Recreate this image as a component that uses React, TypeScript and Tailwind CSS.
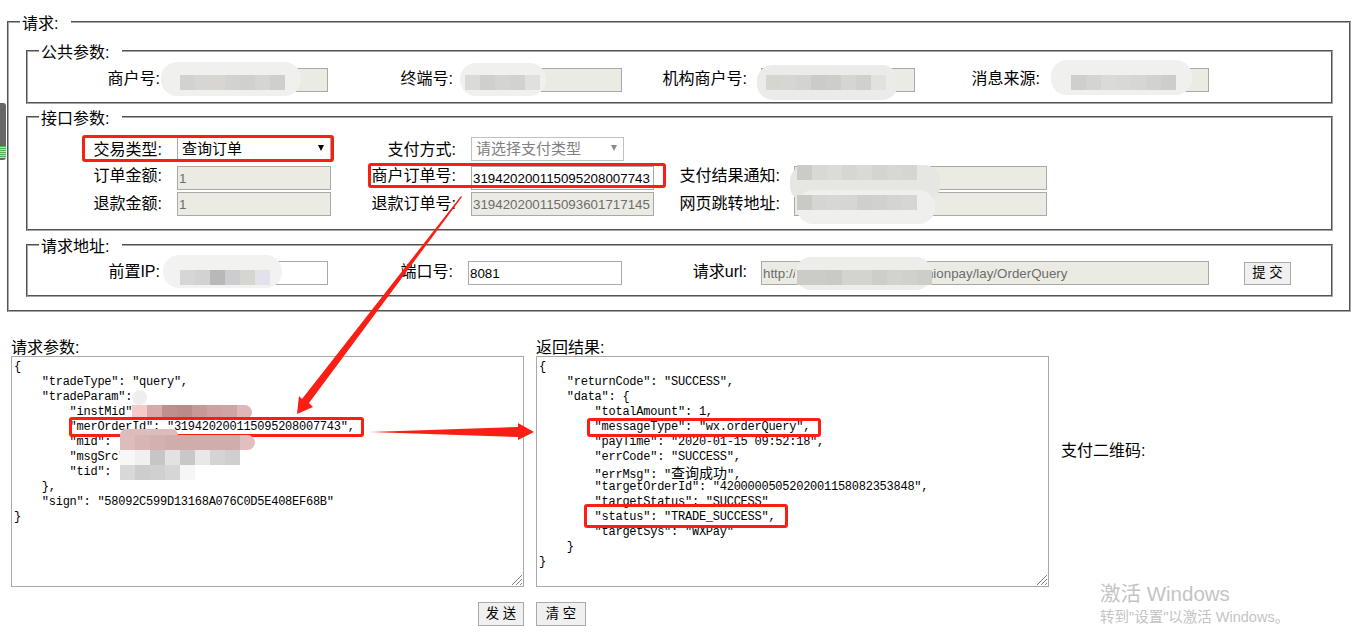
import type { ReactNode } from "react";

const sans = "font-['Liberation_Sans','Noto_Sans_CJK_SC',sans-serif]";

const requestLines: ReactNode[] = [
  "{",
  '    "tradeType": "query",',
  '    "tradeParam":',
  '        "instMid"                ,',
  '        "merOrderId": "319420200115095208007743",',
  '        "mid":',
  '        "msgSrc"',
  '        "tid":',
  "    },",
  '    "sign": "58092C599D13168A076C0D5E408EF68B"',
  "}",
];

const resultLines: ReactNode[] = [
  "{",
  '    "returnCode": "SUCCESS",',
  '    "data": {',
  '        "totalAmount": 1,',
  '        "messageType": "wx.orderQuery",',
  '        "payTime": "2020-01-15 09:52:18",',
  '        "errCode": "SUCCESS",',
  <>
    {'        "errMsg": "'}
    <span className="font-['Noto_Sans_CJK_SC',sans-serif] text-[14px] leading-none tracking-normal">查询成功</span>
    {'",'}
  </>,
  '        "targetOrderId": "4200000505202001158082353848",',
  '        "targetStatus": "SUCCESS"',
  '        "status": "TRADE_SUCCESS",',
  '        "targetSys": "WXPay"',
  "    }",
  "}",
];

function Box({ legend, className, children }: { legend: string; className: string; children: ReactNode }) {
  return (
    <fieldset className={`border-2 [border-style:groove] border-[#a6a6a6] ${className}`}>
      <legend className="ml-[11px] h-[24px] pl-[2px] pr-[13px] text-[16px] leading-[28px] text-black">{legend}</legend>
      {children}
    </fieldset>
  );
}

function Label({ className, children }: { className: string; children: ReactNode }) {
  return <label className={`h-[24px] shrink-0 text-right text-[16px] leading-[22px] text-black ${className}`}>{children}</label>;
}

function Input({ className, value, disabled }: { className: string; value?: string; disabled?: boolean }) {
  return (
    <input
      readOnly
      value={value ?? ""}
      className={`h-[24px] shrink-0 border border-[#a9a9a9] px-[1px] text-[13.33px] outline-none ${
        disabled ? "bg-[#ebebe4] text-[#6d6d6d]" : "bg-white text-black"
      } ${className}`}
    />
  );
}

function Select({ className, text, disabled }: { className: string; text: string; disabled?: boolean }) {
  return (
    <div
      className={`flex h-[24px] shrink-0 items-center justify-between border pl-[4px] pr-[6px] pt-[1px] text-[15px] ${
        disabled ? "border-[#c0c0c0] text-[#808080]" : "border-[#a9a9a9] text-black"
      } ${className}`}
    >
      <span>{text}</span>
      <svg width="6" height="6" viewBox="0 0 6 6" className="mb-[4px]">
        <path d="M0 0h6L3 6z" fill={disabled ? "#8a8a8a" : "#000"} />
      </svg>
    </div>
  );
}

function Button({ className, children }: { className: string; children: string }) {
  return (
    <button className={`shrink-0 border border-[#a9a9a9] bg-[#f0f0f0] text-[13.33px] text-black ${className}`}>
      {children}
    </button>
  );
}

function Code({ lines }: { lines: ReactNode[] }) {
  return (
    <div className="relative h-[231px] w-[513px] shrink-0 overflow-hidden border border-[#a9a9a9] bg-white pl-[2px] pt-[3px]">
      <div className="font-['Liberation_Mono',monospace] text-[12px] leading-[15px] tracking-[-0.25px] whitespace-pre text-black">
        {lines.map((line, i) => (
          <div key={i} className="h-[15px]">
            {line}
          </div>
        ))}
      </div>
      <svg width="12" height="12" viewBox="0 0 12 12" className="absolute bottom-0 right-0">
        <path d="M1 11 11 1M5 11l6-6M9 11l2-2" stroke="#808080" strokeWidth="1" />
      </svg>
    </div>
  );
}

function Smudge({ className }: { className: string }) {
  return <div className={`absolute rounded-[16px] ${className}`} />;
}

function Pixels({ className, colors }: { className: string; colors: string[] }) {
  return (
    <div className={`absolute flex ${className}`}>
      {colors.map((c, i) => (
        <div key={i} className="h-[15px] w-[15px]" style={{ backgroundColor: c }} />
      ))}
    </div>
  );
}

function RedBox({ className }: { className: string }) {
  return <div className={`absolute rounded-[3px] border-[3px] border-[#fb1e14] ${className}`} />;
}

export default function App() {
  return (
    <div className={`relative h-[639px] w-full overflow-hidden bg-white ${sans}`}>
      <div className="pl-[7px] pt-[10px]">
        <Box legend="请求:" className="h-[302px] w-[1344px]">
          <Box legend="公共参数:" className="ml-[17px] mt-[5px] h-[65px] w-[1307px]">
            <div className="flex items-center pt-[5px]">
              <Label className="mr-[17px] w-[132px]">商户号:</Label>
              <Input disabled className="w-[151px]" />
              <Label className="mr-[17px] w-[125px]">终端号:</Label>
              <Input disabled className="w-[152px]" />
              <Label className="mr-[14px] w-[125px]">机构商户号:</Label>
              <Input disabled className="w-[154px]" />
              <Label className="mr-[17px] w-[125px]">消息来源:</Label>
              <Input disabled className="w-[152px]" />
            </div>
          </Box>
          <Box legend="接口参数:" className="ml-[17px] mt-[1px] h-[126px] w-[1307px]">
            <div className="flex flex-col pt-[8px]">
              <div className="flex items-center">
                <Label className="mr-[15px] w-[134px] pt-[2px]">交易类型:</Label>
                <Select className="w-[154px]" text="查询订单" />
                <Label className="mr-[15px] w-[125px] pt-[2px]">支付方式:</Label>
                <Select disabled className="w-[153px]" text="请选择支付类型" />
              </div>
              <div className="mt-[5px] flex items-center">
                <Label className="mr-[15px] w-[134px] -translate-y-[1px]">订单金额:</Label>
                <Input disabled className="w-[154px]" value="1" />
                <Label className="mr-[15px] w-[125px] -translate-y-[1px]">商户订单号:</Label>
                <Input className="w-[183px]" value="319420200115095208007743" />
                <Label className="mr-[14px] w-[126px] -translate-y-[1px]">支付结果通知:</Label>
                <Input disabled className="w-[253px]" />
              </div>
              <div className="mt-[2px] flex items-center">
                <Label className="mr-[15px] w-[134px] pt-[1px]">退款金额:</Label>
                <Input disabled className="w-[154px]" value="1" />
                <Label className="mr-[15px] w-[125px] pt-[1px]">退款订单号:</Label>
                <Input disabled className="w-[183px]" value="319420200115093601717145" />
                <Label className="mr-[14px] w-[126px] pt-[1px]">网页跳转地址:</Label>
                <Input disabled className="w-[253px]" />
              </div>
            </div>
          </Box>
          <Box legend="请求地址:" className="ml-[17px] mt-[2px] h-[64px] w-[1307px]">
            <div className="flex items-center pt-[4px]">
              <Label className="mr-[17px] w-[132px]">前置IP:</Label>
              <Input className="w-[151px]" />
              <Label className="mr-[15px] w-[125px]">端口号:</Label>
              <Input className="w-[154px]" value="8081" />
              <Label className="mr-[14px] w-[125px]">请求url:</Label>
              <Input disabled className="w-[448px]" value="http://                                   nionpay/lay/OrderQuery" />
              <Button className="ml-[35px] h-[23px] w-[47px]">提 交</Button>
            </div>
          </Box>
        </Box>
      </div>

      <div className="flex gap-[12px] pl-[11px] pt-[26px]">
        <div>
          <div className="h-[18px] text-[16px] leading-[20px] text-black">请求参数:</div>
          <Code lines={requestLines} />
        </div>
        <div>
          <div className="h-[18px] text-[16px] leading-[20px] text-black">返回结果:</div>
          <Code lines={resultLines} />
        </div>
        <div className="pt-[101px] text-[16px] leading-[24px] text-black">支付二维码:</div>
      </div>

      <div className="flex items-center gap-[12px] pl-[478px] pt-[15px]">
        <Button className="h-[24px] w-[46px]">发 送</Button>
        <Button className="h-[24px] w-[50px]">清 空</Button>
      </div>

      {/* blurred values */}
      <Smudge className="left-[161px] top-[62px] h-[34px] w-[140px] bg-[#f0f0ee]" />
      <Pixels className="left-[180px] top-[75px]" colors={["#d2d2cf", "#d6d6d2", "#d9d5cf", "#d2d2ce", "#d0d0cc", "#d5d5d1", "#cfcfcb"]} />
      <Smudge className="left-[460px] top-[63px] h-[33px] w-[86px] bg-[#f0f0ee]" />
      <Pixels className="left-[465px] top-[75px]" colors={["#dadad7", "#cfcfcc", "#d4d4d1", "#d2d2cf", "#e0e0dd"]} />
      <Smudge className="left-[757px] top-[65px] h-[35px] w-[141px] bg-[#ebebe9]" />
      <Pixels className="left-[766px] top-[75px]" colors={["#d8d4cf", "#d6d6d2", "#d3d3cf", "#cbcbc7", "#cdcdc9", "#d6d6d1", "#d0d0cc", "#e2e2dc"]} />
      <Smudge className="left-[1051px] top-[60px] h-[35px] w-[141px] bg-[#f0f0ee]" />
      <Pixels className="left-[1071px] top-[75px]" colors={["#cfcfcc", "#d4d4d0", "#dadad6", "#d8d8d4", "#d6d6d2", "#d2d2ce", "#cdcdc9"]} />
      <Smudge className="left-[790px] top-[165px] h-[37px] w-[150px] bg-[#e6e6e2]" />
      <Smudge className="left-[797px] top-[190px] h-[34px] w-[138px] bg-[#efefed]" />
      <Pixels className="left-[797px] top-[165px]" colors={["#cbcbc8", "#d8d8d4", "#dbdbd7", "#d6d6d2", "#d9d9d5", "#d4d4d0", "#d7d7d3", "#d5d5d1"]} />
      <Pixels className="left-[797px] top-[195px]" colors={["#c9c9c6", "#d5d5d1", "#d7d7d3", "#d6d6d2", "#cfcfcb", "#d1d1cd", "#d4d4d0", "#d6d6d2"]} />
      <Smudge className="left-[163px] top-[255px] h-[33px] w-[119px] bg-[#f2f2f1]" />
      <Pixels className="left-[180px] top-[270px]" colors={["#d6d6d6", "#d2d2d2", "#b8b8b8", "#cdcdd0", "#d6d6d0", "#e2e2ea"]} />
      <Smudge className="left-[795px] top-[257px] h-[33px] w-[137px] bg-[#ededea]" />
      <Pixels className="left-[797px] top-[270px]" colors={["#cbcbc8", "#cbcbc8", "#c9c9c6", "#d3d3d0", "#d3d3d0", "#cdcdca", "#d2d2cf", "#d0d0cd", "#cdcdca"]} />

      {/* request panel, pasted mosaic */}
      <Smudge className="left-[132px] top-[390px] h-[15px] w-[15px] rounded-[6px] bg-[#eeeeee]" />
      <Pixels className="left-[132px] top-[405px] overflow-hidden rounded-r-[10px]" colors={["#f7c9c9", "#d6aaaa", "#bd8f8f", "#b98b8b", "#c69999", "#cda1a1", "#d0a4a4", "#e0b6b6"]} />

      <RedBox className="left-[82px] top-[135px] h-[27px] w-[252px]" />
      <RedBox className="left-[368px] top-[163px] h-[25px] w-[298px]" />
      <RedBox className="left-[69px] top-[417px] h-[20px] w-[295px]" />
      <RedBox className="left-[587px] top-[418px] h-[19px] w-[234px]" />
      <RedBox className="left-[584px] top-[504px] h-[24px] w-[204px]" />

      <Smudge className="left-[120px] top-[429px] h-[12px] w-[58px] rounded-[8px] bg-[#dcbcbc]" />
      <Pixels className="left-[120px] top-[435px] overflow-hidden rounded-r-[10px]" colors={["#dcbcbc", "#d7b5b5", "#d4b0b0", "#d0adad", "#d0adad", "#cfadad", "#d0adad", "#d0adad", "#e2bebe"]} />
      <Pixels className="left-[120px] top-[450px]" colors={["#f7f7f7", "#f0f0f0", "#c6c6c6", "#e2e2e2", "#c8c8c8", "#e8e8e8", "#d4d4d4", "#cfcfcf"]} />
      <Pixels className="left-[120px] top-[465px]" colors={["#d8d8d8", "#cdcdcd", "#d0d0d0", "#d6d6d6", "#f6f6f6"]} />

      <svg width="1362" height="639" viewBox="0 0 1362 639" className="pointer-events-none absolute inset-0">
        <path d="M461 196 462 197 309 403 313 407 297 414 299 396 302 399z" fill="#fb1e14" />
        <path d="M370 432 518 427V423L534 432 518 440V437z" fill="#fb1e14" />
      </svg>

      <div className="absolute left-[0px] top-[103px] flex h-[57px] w-[6px] flex-col justify-end rounded-r-[3px] bg-[#666666] pb-[2px]">
        <div className="h-[12px] bg-[repeating-linear-gradient(#4caf50_0,#4caf50_1px,#b9e0b9_1px,#b9e0b9_2px)]" />
      </div>

      <div className="absolute left-[1100px] top-[582px] text-[#c4c4c4]">
        <div className="text-[20.5px] leading-[24px]">激活 Windows</div>
        <div className="text-[14.5px] leading-[22px]">转到"设置"以激活 Windows。</div>
      </div>
    </div>
  );
}
